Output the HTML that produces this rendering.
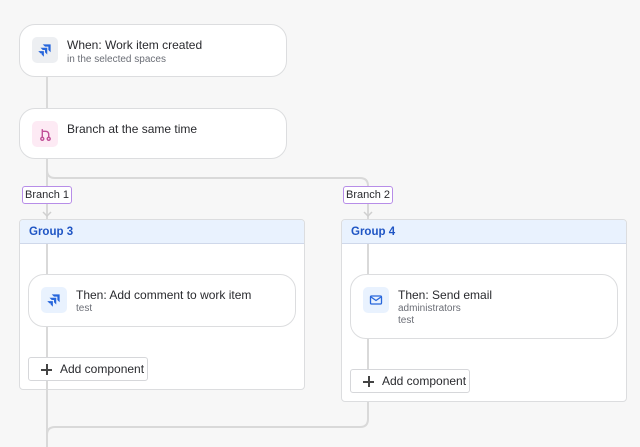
<!DOCTYPE html>
<html><head><meta charset="utf-8"><style>
*{box-sizing:border-box;margin:0;padding:0}
body{width:640px;height:447px;background:#f7f7f7;font-family:"Liberation Sans",sans-serif;position:relative;overflow:hidden;color:#292a2e}
.a{position:absolute}
.card{position:absolute;background:#fff;border:1px solid #dcdddf;border-radius:16px}
.ic{position:absolute;width:26px;height:26px;border-radius:5px;display:flex;align-items:center;justify-content:center}
.t{position:absolute;font-size:12px;color:#292a2e}
.s{position:absolute;font-size:10px;color:#6b6e76}
.grp{position:absolute;background:#fff;border:1px solid #dcdddf;border-radius:4px;overflow:hidden}
.gh{height:24px;background:#e9f2fe;border-bottom:1px solid #cfd8ea;font-size:11.5px;font-weight:bold;color:#1f55c4;padding:6px 0 0 9px}
.lab{position:absolute;height:18px;border:1px solid #b78de8;border-radius:3px;background:#fff;font-size:11px;padding:2px 2px 0;color:#292a2e}
.btn{position:absolute;width:120px;height:24px;background:#fff;border:1px solid #d6d7da;border-radius:3px;font-size:12px;color:#292a2e;padding:4px 0 0 31px}
.btn:before{content:"";position:absolute;left:12px;top:11px;width:11px;height:1.5px;background:#444}
.btn:after{content:"";position:absolute;left:17px;top:6px;width:1.5px;height:11px;background:#444}
</style></head><body>
<svg class="a" style="left:0;top:0" width="640" height="447">
<g fill="none" stroke="#d9d9d9" stroke-width="2">
<path d="M47 77V447"/>
<path d="M47 159V170q0 8 8 8H360q8 0 8 8V219"/>
<path d="M368 402V419q0 8-8 8H55q-8 0-8 8"/>
</g>
<g stroke="#cfcfcf" stroke-width="1.5" fill="none"><path d="M43 212l4 4 4-4M364 212l4 4 4-4"/></g>
</svg>
<div class="card" style="left:19px;top:24px;width:268px;height:53px">
<div class="ic" style="left:12px;top:12px;background:#edeff2"><svg width="18" height="18" viewBox="0 0 16 16" fill="#2766db"><path d="M6 3h7v7l-2-2V5H8z"/><path d="M4 6h6v6l-2-2V8H6z"/><path d="M2 9h5v5l-2-2v-1H4z"/></svg></div>
<div class="t" style="left:47px;top:13px">When: Work item created</div>
<div class="s" style="left:47px;top:29px">in the selected spaces</div></div>
<div class="card" style="left:19px;top:108px;width:268px;height:51px">
<div class="ic" style="left:12px;top:12px;background:#fdeaf4"><svg width="15" height="15" viewBox="0 0 14 14" fill="none" stroke="#c04f97" stroke-width="1.3"><circle cx="4" cy="11" r="1.4"/><circle cx="10" cy="11" r="1.4"/><path d="M4 2v7.5M4 4h3q3 0 3 3v2.5"/></svg></div>
<div class="t" style="left:47px;top:13px">Branch at the same time</div></div>
<div class="grp" style="left:19px;top:219px;width:286px;height:171px"><div class="gh">Group 3</div></div>
<div class="grp" style="left:341px;top:219px;width:286px;height:183px"><div class="gh">Group 4</div></div>
<svg class="a" style="left:0;top:0" width="640" height="447"><g stroke="#d9d9d9" stroke-width="2"><path d="M47 244V274M47 327V357M47 381V390M368 244V274M368 339V369"/></g></svg>
<div class="lab" style="left:22px;top:186px">Branch 1</div>
<div class="lab" style="left:343px;top:186px">Branch 2</div>
<div class="card" style="left:28px;top:274px;width:268px;height:53px">
<div class="ic" style="left:12px;top:12px;background:#e9f2fe"><svg width="18" height="18" viewBox="0 0 16 16" fill="#2766db"><path d="M6 3h7v7l-2-2V5H8z"/><path d="M4 6h6v6l-2-2V8H6z"/><path d="M2 9h5v5l-2-2v-1H4z"/></svg></div>
<div class="t" style="left:47px;top:13px">Then: Add comment to work item</div>
<div class="s" style="left:47px;top:28px">test</div></div>
<div class="card" style="left:350px;top:274px;width:268px;height:65px">
<div class="ic" style="left:12px;top:12px;background:#e9f2fe"><svg width="14" height="12" viewBox="0 0 14 12" fill="none" stroke="#2766db" stroke-width="1.3"><rect x="1.5" y="2" width="11" height="8" rx="1"/><path d="M2 3l5 3.5L12 3"/></svg></div>
<div class="t" style="left:47px;top:13px">Then: Send email</div>
<div class="s" style="left:47px;top:28px">administrators</div>
<div class="s" style="left:47px;top:40px">test</div></div>
<div class="btn" style="left:28px;top:357px">Add component</div>
<div class="btn" style="left:350px;top:369px">Add component</div>
</body></html>
